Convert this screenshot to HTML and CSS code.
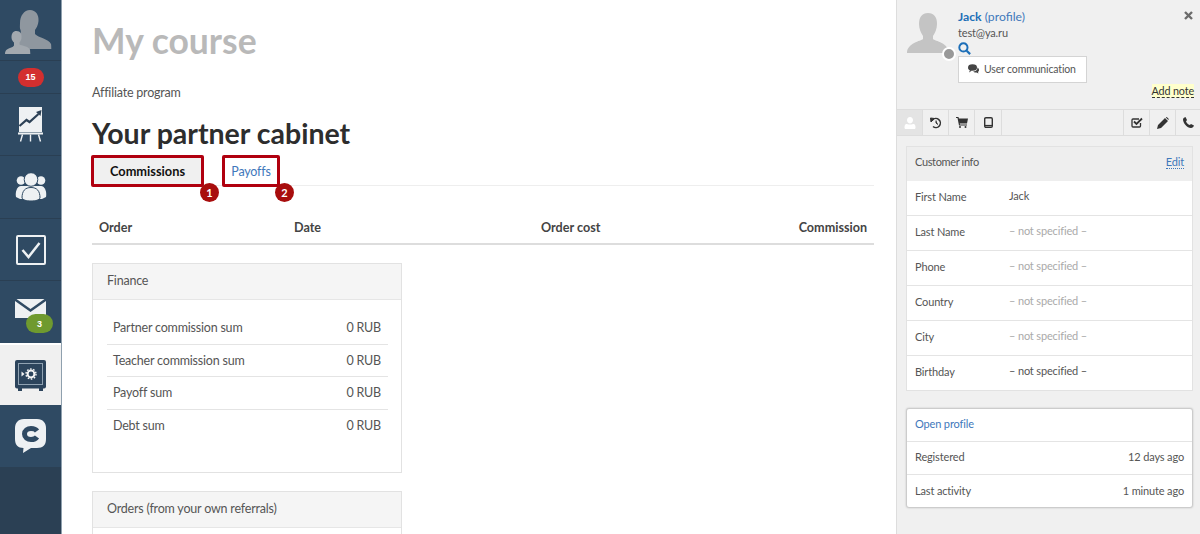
FILE: index.html
```html
<!DOCTYPE html>
<html lang="en">
<head>
<meta charset="utf-8">
<title>My course</title>
<link rel="stylesheet" href="styles.css">
</head>
<body>
<div class="app">
  <nav class="rail">
    <div class="rail-item rail-user">
      <svg width="61" height="60" viewBox="0 0 61 60"><path fill="#8f979f" d="M30 10c6 0 9 5 8.500 11-.3 4-2 7-3.500 9v4c2 3 14 5 16 10 .3 1 .3 4 .3 5H24l-8-6 4-8c1-2 1-4 .500-5-1-2-.5-4-.5-7 0-7 4-13 10-13z"/><path fill="#a3a9af" d="M16.500 31c4 0 5.500 3 5 7-.2 2-1 3-2 4.500v2c2 1 9 2 10.500 5l.3 4.500H5c0-2 .5-3.500 2-4.500 3-2 6-2 7-4v-3c-1-1-2.500-2.500-2.500-5 0-4 1.500-6.500 5-6.500z"/></svg>
    </div>
    <div class="rail-item rail-count"><span class="pill pill-red">15</span></div>
    <div class="rail-item rail-chart">
      <svg width="25" height="35" viewBox="0 0 25 35"><rect x="1" y="0" width="23" height="25" fill="#eef1f3"/><path d="M1.500 19l7-6 3 2 9-8" fill="none" stroke="#2c4156" stroke-width="2.200"/><path d="M18 5l5.500-2-1 6z" fill="#2c4156"/><rect y="25.500" width="25" height="2" fill="#eef1f3"/><path d="M4.500 27.500l-2 7M12.500 27.500v7M20.500 27.500l2 7" stroke="#eef1f3" stroke-width="1.400"/></svg>
    </div>
    <div class="rail-item rail-group">
      <svg width="32" height="28" viewBox="0 0 32 28"><circle cx="6" cy="7.500" r="4.300" fill="#eef1f3"/><circle cx="26" cy="7.500" r="4.300" fill="#eef1f3"/><path d="M1 24c-1-5 1-11 5-11h20c4 0 6 6 5 11l-4 2H5z" fill="#eef1f3"/><circle cx="16" cy="6.500" r="6.800" fill="#eef1f3" stroke="#2f4a63"/><path d="M7 25c0-7 3-10.500 9-10.500S25 18 25 25c-1 2-4 3-9 3s-8-1-9-3z" fill="#eef1f3" stroke="#2f4a63"/></svg>
    </div>
    <div class="rail-item rail-check">
      <svg width="30" height="30" viewBox="0 0 30 30"><rect x="1" y="1" width="28" height="28" rx="1" fill="none" stroke="#eef1f3" stroke-width="2"/><path d="M6.500 15l6 7 11-14" fill="none" stroke="#eef1f3" stroke-width="2.500"/></svg>
    </div>
    <div class="rail-item rail-mail">
      <svg class="mail-icon" width="31" height="19" viewBox="0 0 31 19"><path fill="#eef1f3" d="M0 2l15.500 11L31 2v17H0z"/><path fill="#eef1f3" d="M1.500 0h28L15.500 10z"/></svg>
      <span class="pill pill-green">3</span>
    </div>
    <div class="rail-item rail-safe">
      <svg width="31" height="31" viewBox="0 0 31 31"><rect width="31" height="28.500" rx="2" fill="#2c445c"/><rect x="3.500" y="3.500" width="24" height="21" fill="none" stroke="#90a2b2"/><path d="M3 28h4v3H3zM24 28h4v3h-4z" fill="#2c445c"/><circle cx="16" cy="14" r="3.400" fill="none" stroke="#f4f4f4" stroke-width="2"/><circle cx="16" cy="14" r="5" fill="none" stroke="#f4f4f4" stroke-width="1.400" stroke-dasharray="1.600 1.540"/><path d="M6.500 11.500l3 2.500-3 2.500z" fill="#f4f4f4"/></svg>
    </div>
    <div class="rail-item rail-chat">
      <svg width="31" height="34" viewBox="0 0 31 34"><path fill="#eef1f3" d="M9 0h13c6 0 9 4 9 9v11c0 6-3 9-9 9h-6l-8 5 .5-5C3 29 0 26 0 20V9c0-5 3-9 9-9z"/><path fill="none" stroke="#2f4a63" stroke-width="5" d="M22 12c-1-1.500-3-2.500-6-2.500-3.500 0-6.500 2-6.500 5.500s3 5.500 6.500 5.500c3 0 5-1 6-2.500"/></svg>
    </div>
    <div class="rail-rest"></div>
  </nav>

  <main class="main">
    <h1 class="page-title">My course</h1>
    <p class="crumb">Affiliate program</p>
    <h2 class="section-title">Your partner cabinet</h2>
    <div class="tabs">
      <div class="tab tab-active">Commissions<span class="frame"></span><span class="marker marker-a">1</span></div>
      <div class="tab tab-link">Payoffs<span class="frame"></span><span class="marker marker-b">2</span></div>
    </div>
    <div class="table-head">
      <span class="col col-order">Order</span>
      <span class="col col-date">Date</span>
      <span class="col col-cost">Order cost</span>
      <span class="col col-comm">Commission</span>
    </div>
    <section class="panel">
      <header class="panel-head">Finance</header>
      <div class="panel-body">
        <div class="fin-row"><span>Partner commission sum</span><span>0 RUB</span></div>
        <div class="fin-row"><span>Teacher commission sum</span><span>0 RUB</span></div>
        <div class="fin-row"><span>Payoff sum</span><span>0 RUB</span></div>
        <div class="fin-row"><span>Debt sum</span><span>0 RUB</span></div>
      </div>
    </section>
    <section class="panel panel-next">
      <header class="panel-head">Orders (from your own referrals)</header>
    </section>
  </main>

  <aside class="side">
    <div class="side-top">
      <div class="avatar">
        <svg width="42" height="40" viewBox="0 0 42 40"><path fill="#c4c4c4" d="M21 0c6 0 9 4 9 11 0 5-2 9-4 12v3c2 2 16 4 16 14H0c0-10 14-12 16-14v-3c-2-3-4-7-4-12 0-7 3-11 9-11z"/></svg>
        <span class="status"></span>
      </div>
      <div class="who">
        <div class="who-name"><b>Jack</b> (profile)</div>
        <div class="who-mail">test@ya.ru</div>
        <svg class="who-search" width="13" height="13" viewBox="0 0 12 12"><circle cx="5" cy="5" r="3.800" fill="none" stroke="#1d6fb8" stroke-width="1.800"/><path d="M8 8l3.200 3.200" stroke="#1d6fb8" stroke-width="2"/></svg>
        <div class="comm-btn">
          <svg width="11" height="10" viewBox="0 0 11 10"><ellipse cx="4.500" cy="3.500" rx="4.500" ry="3.300" fill="#444"/><path d="M2 6L1 8.500 4 6.500z" fill="#444"/><path d="M9.500 3.500c1 .7 1.500 1.500 1.500 2.500 0 1-.5 1.500-1 2l.5 1.500-2-1c-1 0-2.500 0-3.500-1 2 0 4.500-1 4.500-4z" fill="#444"/></svg>
          User communication
        </div>
      </div>
      <svg class="close" width="9" height="9" viewBox="0 0 9 9"><path d="M1 1l7 7M8 1L1 8" stroke="#6b6b6b" stroke-width="2.400"/></svg>
      <span class="note">Add note</span>
    </div>
    <div class="side-tabs">
      <span class="stab stab-on"><svg width="12" height="12" viewBox="0 0 12 12"><path fill="#fff" d="M6 0c2 0 3 1.500 3 3.200S7.500 6.500 6 6.500 3 5 3 3.200 4 0 6 0zM2 7c1 0 2 .5 4 .5S9 7 10 7c1 .2 1.500 2 1.500 3.500 0 1-.5 1.500-1.500 1.500H2c-1 0-1.500-.5-1.500-1.500C.5 9 1 7.200 2 7z"/></svg></span>
      <span class="stab"><svg width="12" height="12" viewBox="0 0 12 12"><path d="M2.500 3a4.500 4.500 0 1 1 .5 6.500" fill="none" stroke="#333" stroke-width="1.500"/><path d="M.5 1l4 .5L1 5zM6 3.500V6l2 1.500" fill="#333" stroke="#333"/></svg></span>
      <span class="stab"><svg width="12" height="11" viewBox="0 0 12 11"><path fill="#333" d="M0 0h2.500l.4 1.500H12l-1 5H3.800l.2 1h7v1H3L1.500 1H0z"/><circle cx="4" cy="10" r="1" fill="#333"/><circle cx="9.500" cy="10" r="1" fill="#333"/></svg></span>
      <span class="stab stab-wide"><svg width="9" height="11" viewBox="0 0 9 11"><rect x=".7" y=".7" width="7.600" height="9.600" rx="1.200" fill="none" stroke="#333" stroke-width="1.400"/><path d="M1 8.500h7" stroke="#333" stroke-width="1.200"/></svg></span>
      <span class="stab-gap"></span>
      <span class="stab"><svg width="12" height="11" viewBox="0 0 12 11"><path d="M9.500 6v3c0 .7-.4 1-1 1H2c-.6 0-1-.3-1-1V3c0-.6.4-1 1-1h6" fill="none" stroke="#333" stroke-width="1.300"/><path d="M3 4.500L5.500 7 11 1.500" fill="none" stroke="#333" stroke-width="1.800"/></svg></span>
      <span class="stab"><svg width="12" height="12" viewBox="0 0 12 12"><path fill="#333" d="M0 12l1-4L8 1l3 3-7 7zM8.800.500l1-.5 2 2-.5 1z"/></svg></span>
      <span class="stab stab-last"><svg width="11" height="11" viewBox="0 0 11 11"><path fill="#333" d="M2.500 0L4 3 3 4.500C4 6.500 5 7.500 6.800 8L8 7l3 1.500C10.500 10 9.500 11 8 11 4 11 0 6 0 2.500 0 1.500 1 .5 2.500 0z"/></svg></span>
    </div>
    <div class="side-body">
      <section class="card">
        <header class="card-head"><span class="card-title">Customer info</span><span class="edit">Edit</span></header>
        <div class="info-row info-first"><span class="info-key">First Name</span><span class="info-val">Jack</span></div>
        <div class="info-row"><span class="info-key">Last Name</span><span class="info-val muted">– not specified –</span></div>
        <div class="info-row"><span class="info-key">Phone</span><span class="info-val muted">– not specified –</span></div>
        <div class="info-row"><span class="info-key">Country</span><span class="info-val muted">– not specified –</span></div>
        <div class="info-row"><span class="info-key">City</span><span class="info-val muted">– not specified –</span></div>
        <div class="info-row"><span class="info-key">Birthday</span><span class="info-val">– not specified –</span></div>
      </section>
      <section class="card card-raised">
        <div class="stat-row stat-link">Open profile</div>
        <div class="stat-row"><span>Registered</span><span>12 days ago</span></div>
        <div class="stat-row stat-end"><span>Last activity</span><span>1 minute ago</span></div>
      </section>
    </div>
  </aside>
</div>
</body>
</html>
```

FILE: styles.css
```css
* { box-sizing: border-box; }
html, body { margin: 0; height: 100%; overflow: hidden; }
body { font-family: Lato, "Liberation Sans", sans-serif; color: #555; background: #fff; font-size: 12.500px; letter-spacing: -.2px; }
.app { display: flex; height: 534px; overflow: hidden; }

.rail { width: 62px; flex: none; display: flex; flex-direction: column; background: #2b4054; border-right: 1px solid #8fa0ae; letter-spacing: 0; }
.rail-item { display: flex; align-items: center; justify-content: center; background: #2f4a63; border-bottom: 1px solid #2a3f53; position: relative; flex: none; }
.rail-user { height: 61px; }
.rail-count { height: 33px; }
.rail-chart { height: 62px; }
.rail-group { height: 63px; }
.rail-check { height: 62px; }
.rail-mail { height: 62px; border-bottom: 0; }
.rail-safe { height: 62px; background: #f0f0f0; border-top: 2px solid #fff; border-bottom: 0; padding-top: 1px; }
.rail-chat { height: 62px; border-bottom: 0; align-items: flex-start; padding-top: 14px; }
.rail-rest { flex: 1; }
.pill { display: inline-flex; align-items: center; justify-content: center; border-radius: 10px; font-family: "Liberation Sans", sans-serif; font-weight: 700; font-size: 9px; color: #fff; }
.pill-red { width: 26px; height: 19px; background: #d32f2f; }
.pill-green { position: absolute; left: 26px; top: 33px; width: 27px; height: 19px; background: #6f9a2f; }
.mail-icon { margin: -7px 0 0 0; }

.main { flex: 1; min-width: 0; padding: 0 22px 0 30px; }
.page-title { margin: 20px 0 0; font-size: 35.500px; line-height: 42px; font-weight: 700; color: #b9b9b9; letter-spacing: 0; }
.crumb { margin: 22px 0 0; line-height: 18px; color: #555; }
.section-title { margin: 14px 0 0; font-size: 28.500px; line-height: 34px; font-weight: 700; color: #2d2d2d; letter-spacing: 0; }
.tabs { display: flex; margin-top: 6px; height: 30px; border-bottom: 1px solid #eee; }
.tab { position: relative; height: 29px; display: flex; align-items: center; justify-content: center; }
.tab-active { width: 113px; margin-left: -1px; background: #f0f0f0; color: #111; font-weight: 700; font-size: 12.800px; letter-spacing: 0; }
.tab-link { width: 58px; margin-left: 18px; padding-top: 2px; color: #3f78bb; font-size: 12.500px; }
.frame { position: absolute; left: 0; right: 0; top: -1px; bottom: -2px; border: 3px solid #b0000f; border-radius: 2px; pointer-events: none; }
.marker { position: absolute; top: 27px; width: 19px; height: 19px; border-radius: 50%; background: #a80d0d; color: #fff; font-size: 11px; font-weight: 700; letter-spacing: 0; display: flex; align-items: center; justify-content: center; }
.marker-a { left: 109px; }
.marker-b { left: 53px; }
.table-head { position: relative; height: 59px; border-bottom: 2px solid #ddd; font-size: 12.600px; letter-spacing: 0; font-weight: 700; color: #444; }
.col { position: absolute; top: 34px; }
.col-order { left: 7px; }
.col-date { left: 202px; }
.col-cost { left: 449px; }
.col-comm { right: 7px; }
.panel { width: 310px; height: 210px; border: 1px solid #e2e2e2; margin-top: 18px; }
.panel-head { height: 36px; padding: 0 14px 2px; display: flex; align-items: center; background: #f5f5f5; border-bottom: 1px solid #e6e6e6; color: #555; }
.panel-body { padding: 12px 13px 0 14px; }
.fin-row { display: flex; justify-content: space-between; height: 32.500px; align-items: center; padding: 0 7px 0 6px; border-bottom: 1px solid #e4e4e4; color: #555; }
.fin-row:last-child { border-bottom: 0; }
.panel-next { margin-top: 18px; height: 60px; }

.side { width: 304px; flex: none; background: #f0f0f0; border-left: 1px solid #ddd; font-size: 11px; letter-spacing: -.15px; color: #555; }
.side-top { position: relative; height: 109px; display: flex; padding: 9px 0 0 10px; }
.avatar { position: relative; width: 42px; height: 40px; margin-top: 4px; flex: none; }
.avatar svg { display: block; }
.status { position: absolute; left: 35px; top: 34px; width: 14px; height: 14px; border-radius: 50%; background: #999; border: 2px solid #fff; }
.who { margin-left: 9px; }
.who-name { color: #3f78bb; font-size: 12.200px; line-height: 15px; letter-spacing: 0; }
.who-name b { color: #1d6fb8; }
.who-mail { line-height: 16px; color: #555; margin-top: 1px; }
.who-search { display: block; margin-top: 1px; }
.comm-btn { margin-top: 1px; width: 129px; height: 27px; display: flex; align-items: center; gap: 5px; padding: 0 0 2px 9px; background: #fff; border: 1px solid #d4d4d4; font-size: 10.500px; color: #555; }
.close { position: absolute; right: 7px; top: 11px; }
.note { position: absolute; right: 6px; top: 84px; font-size: 10.800px; line-height: 13px; color: #333; background: #ffffcc; border-bottom: 1px dashed #333; }
.side-tabs { height: 27px; display: flex; background: #f0f0f0; border-top: 1px solid #ddd; border-bottom: 1px solid #ddd; }
.stab { width: 26px; display: flex; align-items: center; justify-content: center; border-right: 1px solid #ddd; }
.stab-on { background: #e4e4e4; }
.stab-wide { width: 27px; }
.stab-gap { flex: 1; border-right: 1px solid #ddd; }
.stab-last { border-right: 0; width: 24px; }
.side-body { padding: 10px 7px 0 9px; }
.card { background: #fff; border: 1px solid #e2e2e2; }
.card-head { height: 34px; display: flex; align-items: center; justify-content: space-between; padding: 0 8px 5px; background: #eee; }
.card-title { letter-spacing: -.35px; }
.edit { color: #3f78bb; border-bottom: 1px dotted #3f78bb; }
.info-row { height: 35px; display: flex; align-items: center; padding: 0 0 4px 8px; border-top: 1px solid #e4e4e4; }
.info-first { height: 34px; border-top: 0; }
.info-key { width: 94px; color: #555; }
.info-val { color: #555; margin-top: -2px; }
.info-val.muted { color: #aaa; }
.card-raised { margin-top: 17px; border-radius: 3px; border-color: #ccc; box-shadow: 0 0 2px rgba(0,0,0,.2); }
.stat-row { height: 33px; display: flex; align-items: center; justify-content: space-between; padding: 0 8px 3px; border-top: 1px solid #e4e4e4; }
.stat-end { padding-bottom: 1px; }
.stat-link { height: 32px; border-top: 0; color: #3f78bb; }
```
